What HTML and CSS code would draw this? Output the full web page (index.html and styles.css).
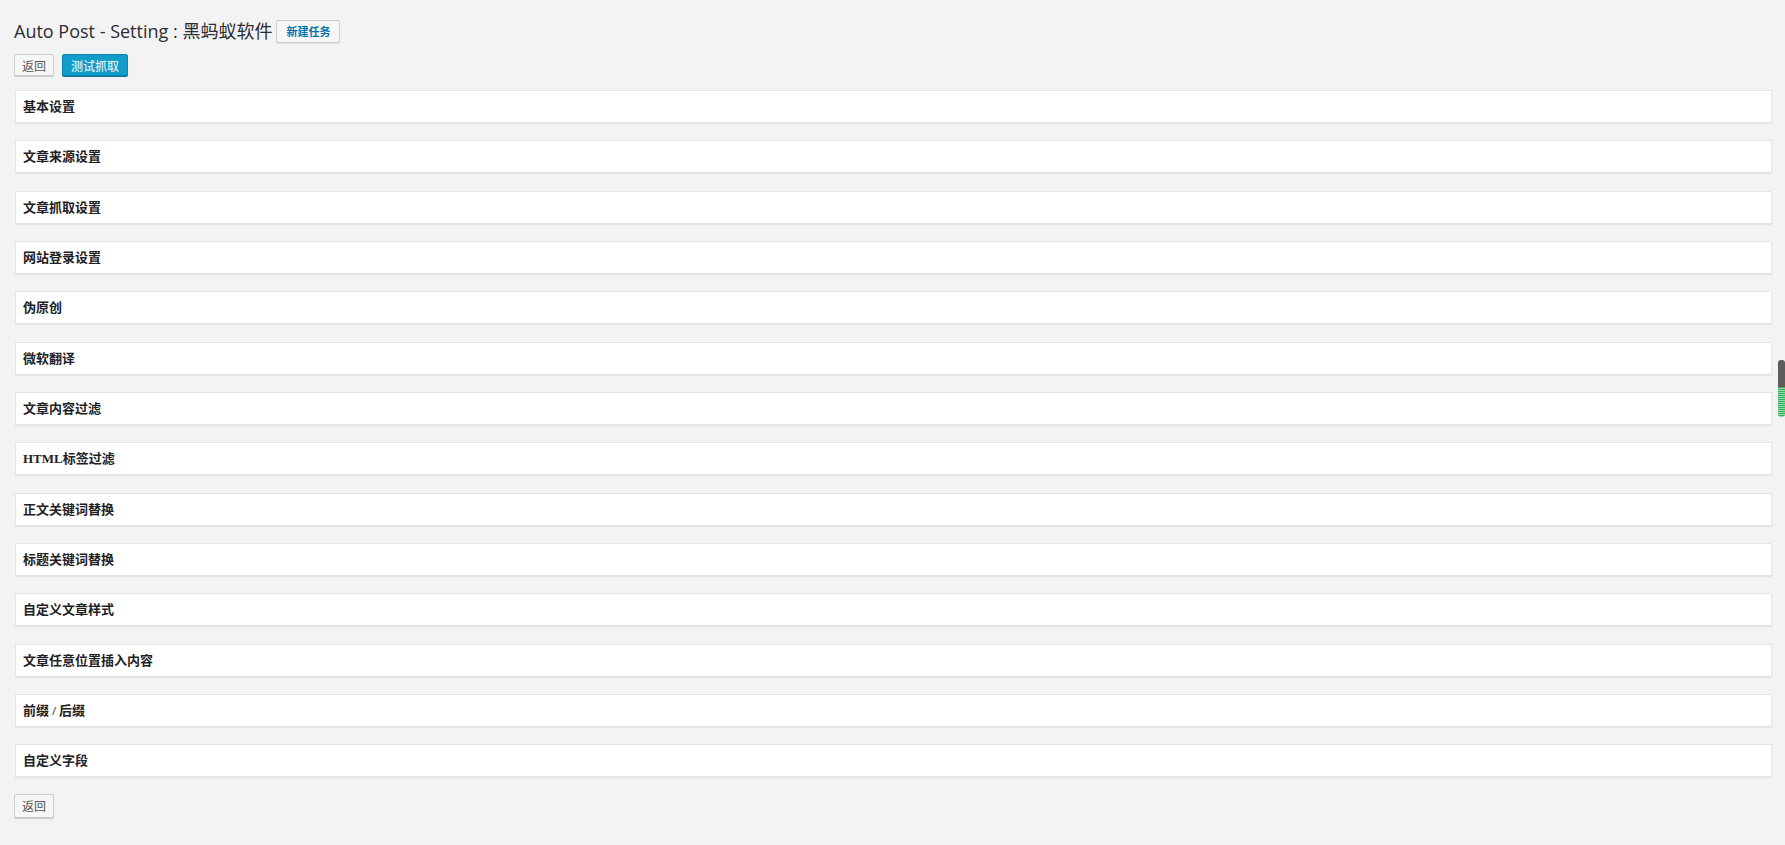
FILE: index.html
```html
<!DOCTYPE html>
<html lang="zh-CN">
<head>
  <meta charset="UTF-8">
  <title>Auto Post - Setting</title>
  <link rel="stylesheet" href="styles.css">
</head>
<body>
  <div class="wrap">
    <h1 class="page-title">
      Auto Post - Setting : 黑蚂蚁软件
      <a href="#" class="title-action">新建任务</a>
    </h1>

    <div class="actions">
      <button class="button">返回</button>
      <button class="button button-primary">测试抓取</button>
    </div>

    <div class="postbox"><h3 class="hndle">基本设置</h3></div>
    <div class="postbox"><h3 class="hndle">文章来源设置</h3></div>
    <div class="postbox"><h3 class="hndle">文章抓取设置</h3></div>
    <div class="postbox"><h3 class="hndle">网站登录设置</h3></div>
    <div class="postbox"><h3 class="hndle">伪原创</h3></div>
    <div class="postbox"><h3 class="hndle">微软翻译</h3></div>
    <div class="postbox"><h3 class="hndle">文章内容过滤</h3></div>
    <div class="postbox"><h3 class="hndle">HTML标签过滤</h3></div>
    <div class="postbox"><h3 class="hndle">正文关键词替换</h3></div>
    <div class="postbox"><h3 class="hndle">标题关键词替换</h3></div>
    <div class="postbox"><h3 class="hndle">自定义文章样式</h3></div>
    <div class="postbox"><h3 class="hndle">文章任意位置插入内容</h3></div>
    <div class="postbox"><h3 class="hndle">前缀 / 后缀</h3></div>
    <div class="postbox"><h3 class="hndle">自定义字段</h3></div>

    <div class="actions bottom">
      <button class="button">返回</button>
    </div>
  </div>

  <div class="scroll-thumb"><span class="thumb-top"></span><span class="thumb-bottom"></span></div>
</body>
</html>
```

FILE: styles.css
```css
html, body {
  margin: 0;
  padding: 0;
  background-color: #f3f3f3;
  color: #23282d;
  font-family: "Open Sans", "Noto Sans CJK SC", sans-serif;
}

.wrap {
  padding: 0 13px 0 14px;
}

.page-title {
  margin: 0;
  padding: 12px 0 0;
  height: 37px;
  font-size: 18px;
  font-weight: 400;
  line-height: 26px;
  color: #2a2e33;
  display: flex;
  align-items: center;
  gap: 4px;
}

.title-action {
  display: inline-block;
  height: 21px;
  line-height: 21px;
  padding: 0 9px;
  border: 1px solid #ccc;
  border-radius: 2px;
  background-color: #f7f7f7;
  color: #0073aa;
  font-size: 11px;
  font-weight: bold;
  text-decoration: none;
  box-shadow: 0 1px 0 #e0e0e0;
  margin-top: 1px;
}

.actions {
  display: flex;
  gap: 8px;
  height: 22px;
  margin-top: 5px;
  margin-bottom: 14px;
}

.actions.bottom {
  margin-top: -1px;
  height: 24px;
}

.button {
  height: 22px;
  padding: 0 7px;
  border: 1px solid #ccc;
  border-radius: 2px;
  background-color: #f7f7f7;
  color: #555;
  font-family: "Noto Sans CJK SC", sans-serif;
  font-size: 12px;
  box-shadow: 0 1px 0 #ccc;
  cursor: pointer;
}

.actions.bottom .button {
  height: 24px;
}

.button-primary {
  background-color: #129cc9;
  border-color: #0c86b0;
  color: #fff;
  box-shadow: 0 1px 0 #0a7299;
  padding: 0 8px;
}

.postbox {
  background-color: #fff;
  border: 1px solid #e5e5e5;
  box-shadow: 0 1px 1px rgba(0, 0, 0, 0.06);
  margin-left: 1px;
  margin-bottom: 17.35px;
}

.hndle {
  margin: 0;
  height: 31px;
  line-height: 31px;
  padding: 0 7px;
  font-family: "Liberation Serif", "Noto Sans CJK SC", serif;
  font-size: 13px;
  font-weight: bold;
  color: #1e2226;
}

.scroll-thumb {
  position: fixed;
  right: 0;
  top: 360px;
  width: 7px;
  height: 57px;
  border-radius: 3px;
  overflow: hidden;
  display: flex;
  flex-direction: column;
}

.thumb-top {
  height: 27px;
  background-color: #5c5c5c;
}

.thumb-bottom {
  flex: 1;
  background: repeating-linear-gradient(#3fae62 0 1px, #8fd9a6 1px 2px);
}
```
